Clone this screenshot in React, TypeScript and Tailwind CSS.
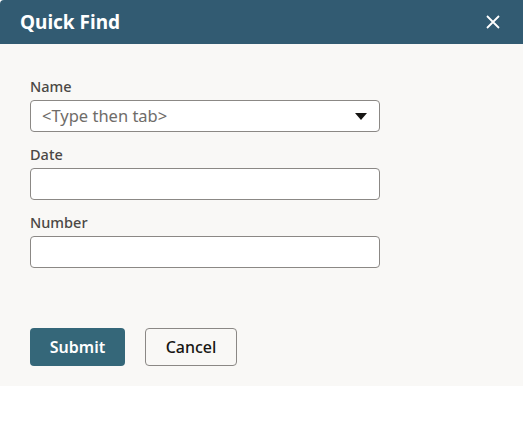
// Form fields shown in the dialog
const fields = [
  { id: "name", label: "Name", placeholder: "<Type then tab>", select: true },
  { id: "date", label: "Date" },
  { id: "number", label: "Number" },
];

export default function App() {
  return (
    <div className="w-[523px] h-[437px] bg-white" style={{ fontFamily: '"Noto Sans", "Open Sans", sans-serif' }}>
      {/* Header */}
      <div className="h-[44px] bg-[#325b72] flex items-center justify-between pl-5 pr-[23px] rounded-tl-[4px]">
        <h1 className="text-[19px] font-bold text-white leading-none">Quick Find</h1>
        <svg width="14" height="14" viewBox="0 0 14 14" className="text-white">
          <path d="M1 1l12 12M13 1L1 13" stroke="currentColor" strokeWidth="1.8" />
        </svg>
      </div>

      {/* Body */}
      <div className="bg-[#f9f8f6] px-[30px] pt-[32px] pb-[20px]">
        <div className="flex flex-col gap-3">
          {fields.map((f) => (
            <div key={f.id} className="flex flex-col gap-1">
              <label className="text-[14.5px] leading-5 font-medium text-[#4b4845]">{f.label}</label>
              <div className="w-[350px] h-[32px] bg-white border border-[#8b8885] rounded-[4px] flex items-center justify-between pl-[11px] pr-[12px]">
                {f.placeholder ? (
                  <span className="text-[16.5px] text-[#6f6c69]">{f.placeholder}</span>
                ) : (
                  <span />
                )}
                {f.select && (
                  <svg width="12" height="7" viewBox="0 0 12 7" className="text-[#161513]">
                    <path d="M0 0h12L6 7z" fill="currentColor" />
                  </svg>
                )}
              </div>
            </div>
          ))}
        </div>

        <div className="flex gap-5 mt-[60px]">
          <button className="h-[38px] w-[95px] rounded-[4px] bg-[#356779] text-white text-[16px] font-semibold">
            Submit
          </button>
          <button className="h-[38px] w-[92px] rounded-[4px] bg-[#f9f8f6] border border-[#8b8885] text-[#161513] text-[16px] font-medium">
            Cancel
          </button>
        </div>
      </div>
    </div>
  );
}
